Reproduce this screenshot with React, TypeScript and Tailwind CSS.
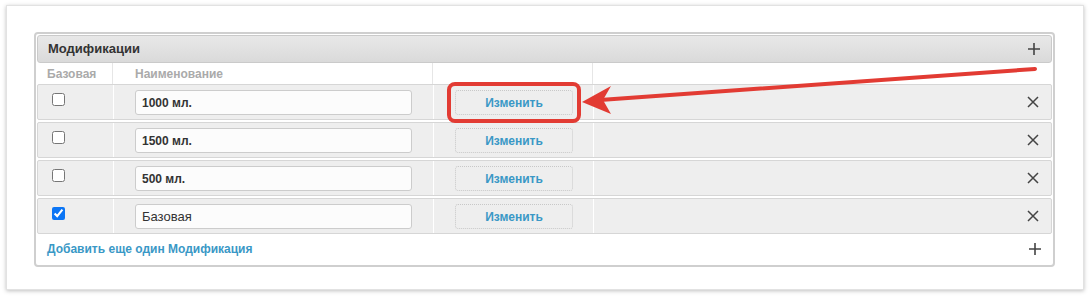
import React from 'react';

interface Modification {
  id: number;
  name: string;
  base: boolean;
}

const rows: Modification[] = [
  { id: 1, name: '1000 мл.', base: false },
  { id: 2, name: '1500 мл.', base: false },
  { id: 3, name: '500 мл.', base: false },
  { id: 4, name: 'Базовая', base: true },
];

const PlusIcon = () => (
  <svg width="14" height="14" viewBox="0 0 14 14" className="block">
    <path d="M7 1v12M1 7h12" stroke="#444" strokeWidth="1.6" fill="none" />
  </svg>
);

const CloseIcon = () => (
  <svg width="12" height="12" viewBox="0 0 12 12" className="block">
    <path d="M1 1l10 10M11 1L1 11" stroke="#444" strokeWidth="1.5" fill="none" />
  </svg>
);

const cols = 'grid grid-cols-[76px_320px_160px_1fr]';

export default function App() {
  return (
    <div className="relative w-[1090px] h-[296px] bg-white font-['Liberation_Sans',Arial,sans-serif] text-[12px] text-[#333]">
      <div className="absolute left-[6px] top-[5px] w-[1078px] h-[285px] bg-white border border-[#e2e2e2] shadow-[0_1px_4px_rgba(0,0,0,0.25)]">
        <div className="mt-[26px] ml-[27px] mr-[28px] border-2 border-[#cfcfcf] rounded-[4px] p-px">
          {/* header */}
          <div className="h-[28px] flex items-center justify-between pl-[10px] pr-[10px] border border-[#cacaca] rounded-[3px] bg-gradient-to-b from-[#e8e8e8] to-[#dadada]">
            <span className="font-bold text-[13px] text-[#333]">Модификации</span>
            <PlusIcon />
          </div>

          {/* column titles */}
          <div className={`${cols} h-[21px] text-[#aaa] font-bold`}>
            <div className="pl-[10px] flex items-center border-r border-[#e6e6e6]">Базовая</div>
            <div className="pl-[22px] flex items-center border-r border-[#e6e6e6]">Наименование</div>
            <div className="border-r border-[#e6e6e6]"></div>
            <div></div>
          </div>

          {/* rows */}
          <div className="flex flex-col gap-[2px]">
            {rows.map((row) => (
              <div key={row.id} className={`${cols} h-[36px] bg-[#eeeeee] border border-[#d6d6d6] rounded-[2px]`}>
                <div className="pl-[14px] pt-[8px] border-r border-white">
                  <input
                    type="checkbox"
                    defaultChecked={row.base}
                    className="block m-0 w-[13px] h-[13px] accent-[#0b75f5]"
                  />
                </div>
                <div className="pl-[21px] pt-[5px] border-r border-white">
                  <div
                    className={`w-[277px] h-[25px] flex items-center pl-[6px] bg-[#fcfcfc] border border-[#cccccc] rounded-[3px] ${
                      row.base ? 'font-normal text-[13px]' : 'font-bold'
                    }`}
                  >
                    {row.name}
                  </div>
                </div>
                <div className="pl-[21px] pt-[5px] border-r border-white">
                  <button className="w-[118px] h-[25px] border border-dotted border-[#c8c8c8] rounded-[3px] bg-[#eeeeee] text-[#3a98c6] font-bold text-[12px]">
                    Изменить
                  </button>
                </div>
                <div className="flex items-center justify-end pr-[12px]">
                  <CloseIcon />
                </div>
              </div>
            ))}
          </div>

          {/* footer */}
          <div className="h-[30px] flex items-center justify-between pl-[10px] pr-[10px]">
            <span className="font-bold text-[#3a98c6]">Добавить еще один Модификация</span>
            <PlusIcon />
          </div>
        </div>
      </div>

      {/* annotation: highlight + arrow */}
      <div className="absolute left-[447px] top-[82px] w-[134px] h-[41px] border-4 border-[#e23b33] rounded-[8px]"></div>
      <svg className="absolute left-0 top-0" width="1090" height="296" viewBox="0 0 1090 296">
        <line x1="1035" y1="69" x2="600" y2="100" stroke="#e23b33" strokeWidth="4" strokeLinecap="round" />
        <path d="M582 102 L611 86 L603 100 L611 114 Z" fill="#e23b33" />
      </svg>
    </div>
  );
}
